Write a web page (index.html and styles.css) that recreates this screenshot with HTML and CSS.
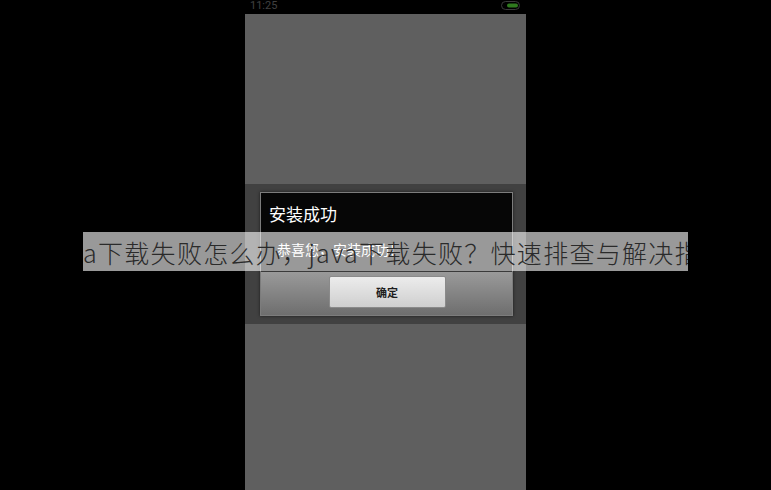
FILE: index.html
```html
<!DOCTYPE html>
<html lang="zh-CN">
<head>
<meta charset="utf-8">
<title>安装成功</title>
<link rel="stylesheet" href="styles.css">
</head>
<body>
<div class="phone">
  <div class="statusbar">
    <span class="clock">11:25</span>
    <svg class="battery" width="20" height="9" viewBox="0 0 20 9">
      <rect x="0.5" y="0.5" width="18" height="8" rx="4" ry="4" fill="none" stroke="#3a3a3a" stroke-width="1"/>
      <rect x="6" y="2.5" width="11" height="4" rx="2" fill="#2f7a1e"/>
    </svg>
  </div>
  <div class="screen">
    <div class="top-space"></div>
    <div class="dim">
      <div class="dialog">
        <div class="dlg-title">安装成功</div>
        <div class="dlg-msg">恭喜您，安装成功！</div>
        <div class="dlg-buttons">
          <div class="btn">确定</div>
        </div>
      </div>
    </div>
  </div>
</div>
<div class="caption"><span class="caption-text">a下载失败怎么办，java下载失败？快速排查与解决指南</span></div>
</body>
</html>
```
FILE: styles.css
```css
html, body {
  margin: 0;
  padding: 0;
  background: #000;
  width: 771px;
  height: 490px;
  overflow: hidden;
  font-family: "Noto Sans CJK SC", "Noto Sans", sans-serif;
}
.phone {
  margin-left: 245px;
  width: 281px;
  height: 490px;
  display: flex;
  flex-direction: column;
}
.statusbar {
  height: 14px;
  display: flex;
  align-items: center;
  justify-content: space-between;
  padding: 0 5px 0 5px;
  box-sizing: border-box;
}
.clock {
  color: #404040;
  font-family: "Roboto", "Noto Sans", sans-serif;
  font-size: 11px;
  line-height: 10px;
  margin-top: -3px;
}
.battery {
  margin-top: -4px;
  margin-right: 0;
}
.screen {
  flex: 1;
  background: #5f5f5f;
  display: flex;
  flex-direction: column;
}
.top-space {
  height: 170px;
}
.dim {
  height: 140px;
  background: #414141;
  padding: 8px 13px 8px 15px;
  box-sizing: border-box;
}
.dialog {
  height: 124px;
  border: 1px solid #7c7c7c;
  box-sizing: border-box;
  display: flex;
  flex-direction: column;
  box-shadow: 0 0 3px rgba(0,0,0,0.6);
}
.dlg-title {
  height: 39px;
  background: #060606;
  color: #fff;
  font-size: 17px;
  line-height: 39px;
  padding-left: 8px;
  padding-top: 1px;
  box-sizing: border-box;
}
.dlg-msg {
  height: 40px;
  background: #000;
  color: #fff;
  font-size: 14px;
  line-height: 34px;
  padding-left: 16px;
  border-bottom: 1px solid #3a3a3a;
  box-sizing: border-box;
}
.dlg-buttons {
  flex: 1;
  background: linear-gradient(#9a9a9a, #6e6e6e);
  display: flex;
  justify-content: center;
  padding-top: 4px;
  box-sizing: border-box;
}
.btn {
  width: 117px;
  height: 32px;
  box-sizing: border-box;
  border: 1px solid #8a8a8a;
  border-radius: 2px;
  background: linear-gradient(#ececec, #cfcfcf);
  color: #1e1e1e;
  font-size: 11px;
  font-weight: 700;
  display: flex;
  align-items: center;
  justify-content: center;
  margin-left: 1px;
}
.caption {
  position: absolute;
  left: 83px;
  top: 232px;
  width: 605px;
  height: 39px;
  background: rgba(255,255,255,0.6);
  overflow: hidden;
  white-space: nowrap;
  display: flex;
  align-items: center;
}
.caption-text {
  color: #2a2a2a;
  font-size: 25px;
  font-weight: 300;
  letter-spacing: 1.3px;
  line-height: 39px;
  margin-top: 2px;
}
```
